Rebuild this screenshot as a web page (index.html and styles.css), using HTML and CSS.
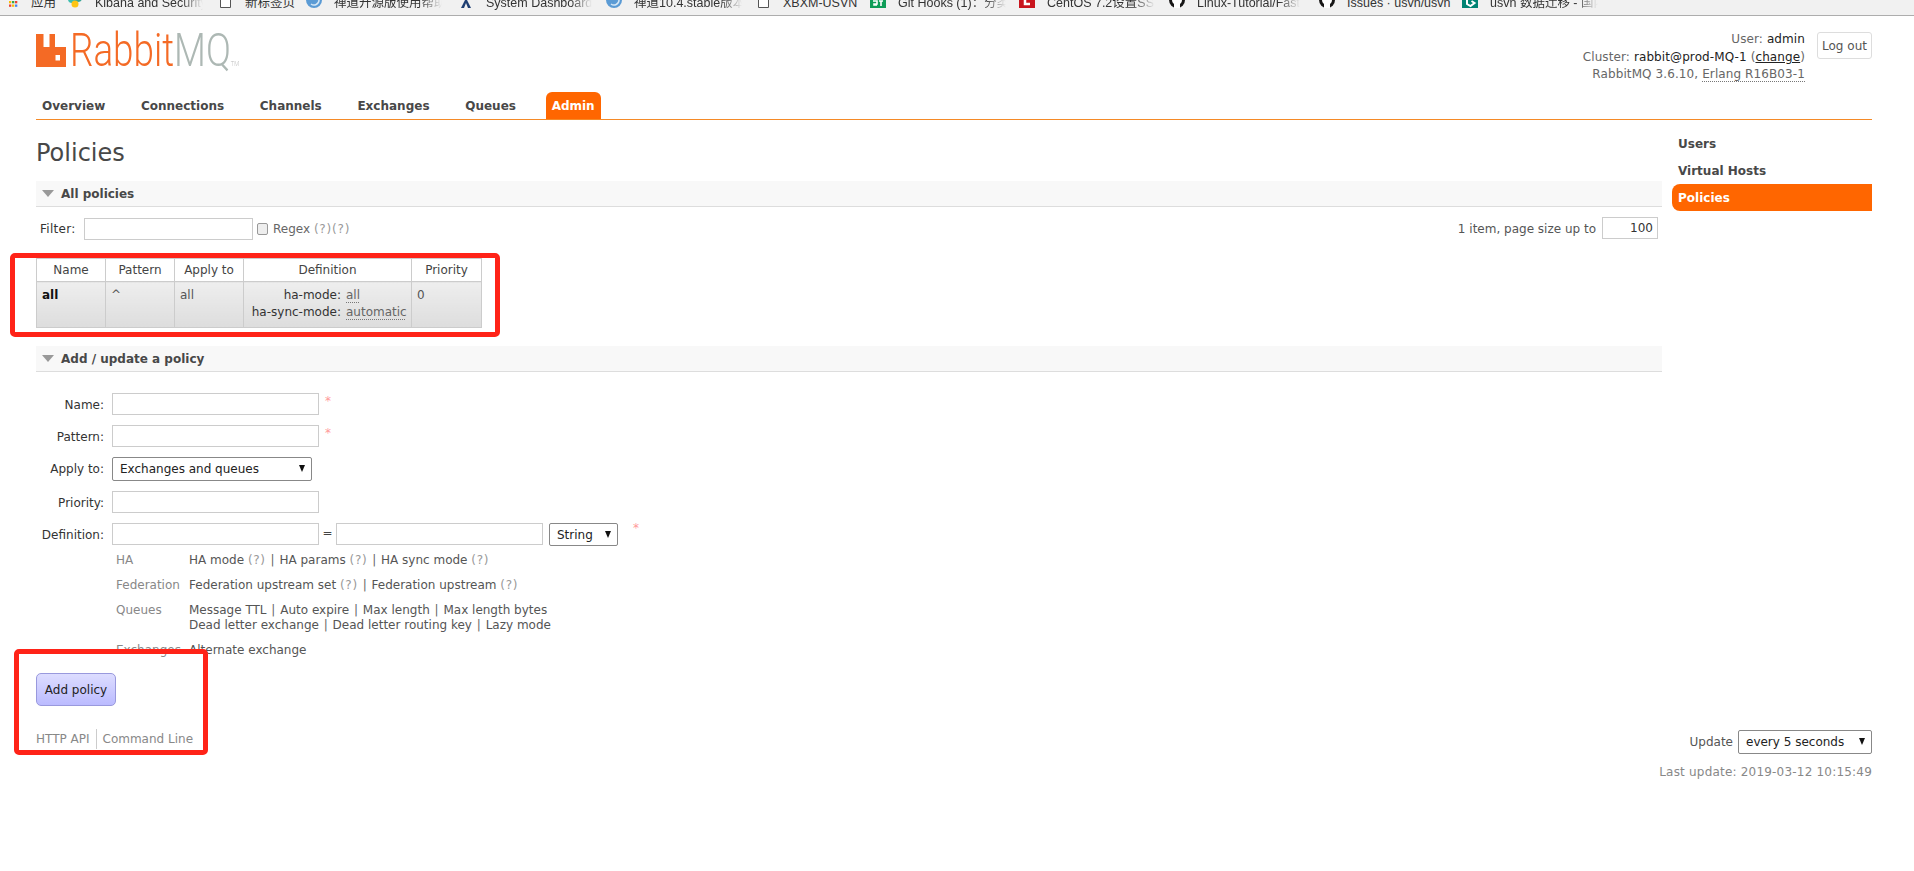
FILE: index.html
```html
<!DOCTYPE html>
<html lang="en">
<head>
<meta charset="utf-8">
<title>RabbitMQ Management</title>
<link rel="stylesheet" href="styles.css">
</head>
<body>
<nav class="bookmarks">
  <div class="bm bm-first"><svg class="ico" viewBox="0 0 16 16"><rect x="4" y="5" width="2.300" height="2.300" fill="#4285f4"/><rect x="7" y="5" width="2.300" height="2.300" fill="#ea4335"/><rect x="10" y="5" width="2.300" height="2.300" fill="#fbbc05"/><rect x="4" y="9" width="2.300" height="2.300" fill="#fbbc05"/><rect x="7" y="9" width="2.300" height="2.300" fill="#34a853"/><rect x="10" y="9" width="2.300" height="2.300" fill="#ea4335"/><rect x="4" y="12.500" width="2.300" height="2.300" fill="#ea4335"/><rect x="7" y="12.500" width="2.300" height="2.300" fill="#fbbc05"/><rect x="10" y="12.500" width="2.300" height="2.300" fill="#4285f4"/></svg><span class="bt">应用</span></div>
  <div class="bm"><svg class="ico" viewBox="0 0 16 16"><circle cx="5" cy="7" r="4" fill="#3ebeb0"/><circle cx="11" cy="6" r="4" fill="#37a595"/><circle cx="8" cy="12" r="3.5" fill="#fec514"/></svg><span class="bt fade">Kibana and Security</span></div>
  <div class="bm bm-doc"><svg class="ico doc" viewBox="0 0 11 16"><path d="M.5 0h10v15.500H.5z" fill="#fff" stroke="#555"/></svg><span class="bt">新标签页</span></div>
  <div class="bm"><svg class="ico" viewBox="0 0 16 16"><circle cx="8" cy="8" r="8" fill="#5b9bd5"/><path d="M3 8a5 5 0 0 1 9-3M5 12a5 5 0 0 0 8-4" fill="none" stroke="#d6e8f6" stroke-width="1.500"/></svg><span class="bt fade">禅道开源版使用帮助</span></div>
  <div class="bm"><svg class="ico" viewBox="0 0 16 16"><path d="M3 0l5 6 5-6h-2L8 3.500 5 0zM3 16l4-8 2 0 4 8h-3L8 11l-2 5z" fill="#1f3f73"/></svg><span class="bt fade">System Dashboard</span></div>
  <div class="bm"><svg class="ico" viewBox="0 0 16 16"><circle cx="8" cy="8" r="8" fill="#5b9bd5"/><path d="M3 8a5 5 0 0 1 9-3M5 12a5 5 0 0 0 8-4" fill="none" stroke="#d6e8f6" stroke-width="1.500"/></svg><span class="bt fade">禅道10.4.stable版本</span></div>
  <div class="bm bm-doc"><svg class="ico doc" viewBox="0 0 11 16"><path d="M.5 0h10v15.500H.5z" fill="#fff" stroke="#555"/></svg><span class="bt">XBXM-USVN</span></div>
  <div class="bm"><svg class="ico" viewBox="0 0 16 16"><rect width="16" height="16" fill="#0f9d58"/><path d="M3 9h4v3H4v1h3M9 9h4M11 9v5" fill="none" stroke="#fff" stroke-width="1.600"/></svg><span class="bt fade">Git Hooks (1)：分类</span></div>
  <div class="bm"><svg class="ico" viewBox="0 0 16 16"><rect width="16" height="16" fill="#c9151e"/><path d="M11 4H6v8h5" fill="none" stroke="#fff" stroke-width="2.500"/></svg><span class="bt fade">CentOS 7.2设置SSH</span></div>
  <div class="bm"><svg class="ico" viewBox="0 0 16 16"><circle cx="8" cy="8" r="8" fill="#181717"/><path d="M5 16v-4c-1-1-2-2-2-4 0-1 1-3 5-3s5 2 5 3c0 2-1 3-2 4v4z" fill="#fff"/></svg><span class="bt fade">Linux-Tutorial/Fast</span></div>
  <div class="bm"><svg class="ico" viewBox="0 0 16 16"><circle cx="8" cy="8" r="8" fill="#181717"/><path d="M5 16v-4c-1-1-2-2-2-4 0-1 1-3 5-3s5 2 5 3c0 2-1 3-2 4v4z" fill="#fff"/></svg><span class="bt">Issues · usvn/usvn</span></div>
  <div class="bm"><svg class="ico" viewBox="0 0 16 16"><rect width="16" height="16" fill="#008373"/><path d="M5 1v11l3.500 2 4-3-3-2" fill="none" stroke="#fff" stroke-width="2"/></svg><span class="bt fade">usvn 数据迁移 - 国内</span></div>
</nav>

<div class="page">
  <header class="head">
    <div class="logo">
      <svg class="logo-mark" viewBox="0 0 30 33"><path fill-rule="evenodd" fill="#f46a25" d="M0 0h7.500v13h6V0h5.500v13H30v20H0zM19.500 21v5.500H24V21z"/></svg>
      <span class="logo-text"><span class="logo-rabbit">Rabbit</span><span class="logo-mq">MQ</span><span class="logo-tm">TM</span></span>
    </div>
    <div class="login">
      <div class="login-text">
        <p>User: <b>admin</b></p>
        <p>Cluster: <b>rabbit@prod-MQ-1</b> (<a class="plain">change</a>)</p>
        <p>RabbitMQ 3.6.10, <abbr>Erlang R16B03-1</abbr></p>
      </div>
      <button class="logout" type="button">Log out</button>
    </div>
  </header>

  <ul class="tabs">
    <li>Overview</li><li>Connections</li><li>Channels</li><li>Exchanges</li><li>Queues</li><li class="on">Admin</li>
  </ul>

  <div class="columns">
    <main class="main">
      <h1>Policies</h1>
      <section class="section">
        <h2><i class="tri"></i>All policies</h2>
        <div class="filter">
          <label class="flabel">Filter:</label>
          <input class="tinput tf" type="text">
          <span class="chk"></span>
          <span class="regex">Regex <span class="hlp hlp-wide">(?)(?)</span></span>
          <span class="pagesize">1 item, page size up to</span>
          <input class="tinput tp" type="text" value="100">
        </div>
        <table class="list">
          <thead><tr><th class="c1">Name</th><th class="c2">Pattern</th><th class="c3">Apply to</th><th class="c4">Definition</th><th class="c5">Priority</th></tr></thead>
          <tbody><tr>
            <td><b class="pname">all</b></td>
            <td>^</td>
            <td>all</td>
            <td class="defn">
              <div class="kv"><span class="k">ha-mode:</span><abbr>all</abbr></div>
              <div class="kv"><span class="k">ha-sync-mode:</span><abbr>automatic</abbr></div>
            </td>
            <td>0</td>
          </tr></tbody>
        </table>
      </section>

      <section class="section section-add">
        <h2><i class="tri"></i>Add / update a policy</h2>
        <form class="form">
          <div class="row"><label>Name:</label><input class="tinput fi" type="text"><span class="star">*</span></div>
          <div class="row"><label>Pattern:</label><input class="tinput fi" type="text"><span class="star">*</span></div>
          <div class="row row-apply"><label>Apply to:</label><span class="sel sel-apply"><select><option>Exchanges and queues</option></select></span></div>
          <div class="row"><label>Priority:</label><input class="tinput fi" type="text"></div>
          <div class="row row-def"><label>Definition:</label><input class="tinput fi" type="text"><span class="eq">=</span><input class="tinput fi" type="text"><span class="sel sel-type"><select><option>String</option></select></span><span class="star star-def">*</span></div>
          <dl class="helpers">
            <dt>HA</dt><dd>HA mode <span class="hlp">(?)</span> <i class="sep">|</i> HA params <span class="hlp">(?)</span> <i class="sep">|</i> HA sync mode <span class="hlp">(?)</span></dd>
            <dt>Federation</dt><dd>Federation upstream set <span class="hlp">(?)</span> <i class="sep">|</i> Federation upstream <span class="hlp">(?)</span></dd>
            <dt>Queues</dt><dd>Message TTL <i class="sep">|</i> Auto expire <i class="sep">|</i> Max length <i class="sep">|</i> Max length bytes<br>Dead letter exchange <i class="sep">|</i> Dead letter routing key <i class="sep">|</i> Lazy mode</dd>
            <dt>Exchanges</dt><dd>Alternate exchange</dd>
          </dl>
          <button class="add" type="button">Add policy</button>
        </form>
      </section>
    </main>
    <aside class="side">
      <a>Users</a>
      <a>Virtual Hosts</a>
      <a class="on">Policies</a>
    </aside>
  </div>

  <footer class="foot">
    <div class="foot-links"><a>HTTP API</a><a>Command Line</a></div>
    <div class="foot-right">
      <div class="update"><span>Update</span><span class="sel sel-upd"><select><option>every 5 seconds</option></select></span></div>
      <div class="last">Last update: 2019-03-12 10:15:49</div>
    </div>
  </footer>
</div>

<div class="mark mark-table"></div>
<div class="mark mark-add"></div>
</body>
</html>
```
FILE: styles.css
```css
* { box-sizing: border-box; }
html, body { margin: 0; padding: 0; background: #fff; }
body { font: 12px/17px "DejaVu Sans", Verdana, sans-serif; color: #484848; position: relative; height: 871px; overflow: hidden; }
p { margin: 0; }

.bookmarks { display: grid; grid-template-columns: 62px 153px 86px 152px 148px 152px 112px 149px 150px 150px 143px 1fr; height: 16px; padding-left: 5px; background: #f1f1f1; border-bottom: 1px solid #adadad; overflow: hidden; }
.bm { display: flex; align-items: flex-start; gap: 12px; height: 16px; margin-top: -8px; min-width: 0; }
.bm-first { gap: 10px; }
.bm-doc { gap: 14px; }
.ico { width: 16px; height: 16px; flex: none; }
.ico.doc { width: 11px; }
.bt { margin-top: 3px; font: 12.500px/16px "Liberation Sans", "Noto Sans CJK SC", sans-serif; color: #333; white-space: nowrap; overflow: hidden; max-width: 108px; }
.fade { -webkit-mask-image: linear-gradient(90deg, #000 80%, transparent); mask-image: linear-gradient(90deg, #000 80%, transparent); }

.page { padding: 0 42px 0 36px; }
.head { display: flex; justify-content: space-between; height: 76px; padding-top: 17px; }
.logo { display: flex; align-items: flex-start; height: 40px; padding-top: 1px; }
.logo-mark { width: 30px; height: 33px; flex: none; }
.logo-text { display: block; font: 300 46px/33px Roboto, sans-serif; transform: scaleX(.8); transform-origin: 0 0; margin-left: 4px; white-space: nowrap; }
.logo-rabbit { color: #f46a25; }
.logo-mq { color: #adb8b4; }
.logo-tm { font-size: 7px; color: #bbb; letter-spacing: 0; }
.login { display: flex; gap: 12px; align-items: flex-start; }
.login-text { text-align: right; color: #666; margin-top: -2px; letter-spacing: .1px; }
.login-text p { height: 17.500px; line-height: 17.500px; }
.login-text b { font-weight: normal; color: #222; }
.plain { color: #222; text-decoration: underline; }
abbr { text-decoration: underline dotted #777; text-underline-offset: 3px; }
.logout { width: 55px; height: 27px; margin: -1px 0 0; padding: 0; background: #fff; border: 1px solid #ddd; border-radius: 3px; color: #555; font: 12px "DejaVu Sans", sans-serif; }

.tabs { list-style: none; margin: 0; padding: 0; display: flex; height: 28px; border-bottom: 1px solid #f58a27; font-weight: bold; color: #484848; }
.tabs li { height: 27px; padding: 0 6px; margin-right: 23.700px; line-height: 29px; }
.tabs li.on { background: #f60; color: #fff; border-radius: 6px 6px 0 0; margin-right: 0; }

.columns { display: grid; grid-template-columns: 1626px 200px; column-gap: 10px; }
.main { min-width: 0; }
h1 { margin: 0; font-size: 24px; font-weight: normal; line-height: 30px; padding-top: 18px; height: 61px; color: #484848; }
.section h2 { display: flex; align-items: center; margin: 0; height: 26px; padding: 2px 0 0 6px; background: #f8f8f8; border-bottom: 1px solid #ddd; font-size: 12px; font-weight: bold; color: #484848; }
.tri { width: 0; height: 0; margin: -2px 7px 0 0; border: 6px solid transparent; border-top: 7px solid #999; border-bottom: 0; }

.filter { display: flex; align-items: center; height: 21px; margin-top: 11px; }
.flabel { margin: 2px 0 0 4px; width: 44px; color: #333; letter-spacing: .3px; }
.tinput { display: block; height: 22px; margin: 0; padding: 0 4px; background: #fff; border: 1px solid #ccc; font: 12px "DejaVu Sans", sans-serif; color: #333; }
.tf { width: 169px; }
.chk { width: 11px; height: 12px; margin: 0 5px 0 4px; background: #eee; border: 1px solid #999; border-radius: 2px; }
.regex { margin-top: 2px; color: #666; }
.hlp { color: #999; letter-spacing: .7px; }
.hlp-wide { letter-spacing: .8px; }
.sep { font-style: normal; margin: 0 1px; color: #666; }
.pagesize { margin: 2px 0 0 auto; color: #555; }
.tp { width: 56px; margin: -2px 4px 0 6px; text-align: right; }

table.list { border-collapse: collapse; margin-top: 19px; table-layout: fixed; width: 445px; }
.list th, .list td { border: 1px solid #ccc; padding: 0; }
.list th { height: 23px; font-weight: normal; text-align: center; color: #444; }
.list td { height: 46px; padding: 5px 5px 3px; vertical-align: top; color: #555; background: linear-gradient(#eee, #ddd); }
.c1 { width: 69px; } .c2 { width: 69px; } .c3 { width: 69px; } .c4 { width: 168px; } .c5 { width: 70px; }
.pname { color: #111; }
.list td.defn { padding: 5px 0 0; }
.kv { display: grid; grid-template-columns: 97px auto; column-gap: 5px; justify-content: start; }
.k { text-align: right; color: #333; }
.kv abbr { justify-self: start; color: #666; }

.section-add { margin-top: 18px; }
.form { padding-top: 21px; }
.row { display: flex; align-items: flex-start; height: 32px; }
.row label { width: 68px; margin-right: 8px; text-align: right; color: #333; line-height: 25px; }
.row-apply { height: 34px; }
.row-def { height: 30px; }
.fi { width: 207px; }
.star { margin-left: 6px; color: #f99; line-height: 16px; }
.star-def { margin: -3px 0 0 15px; }
.eq { width: 17px; text-align: center; line-height: 21px; color: #444; }
.sel { position: relative; display: block; }
.sel select { display: block; width: 100%; height: 100%; margin: 0; padding: 0 0 0 7px; appearance: none; -webkit-appearance: none; background: #fff; border: 1px solid #888; border-radius: 2px; color: #222; font: 12px "DejaVu Sans", sans-serif; }
.sel::after { content: ""; position: absolute; right: 7px; top: 50%; margin-top: -4px; border: 3px solid transparent; border-top: 7px solid #111; border-bottom: 0; }
.sel-apply { width: 200px; height: 24px; }
.sel-type { width: 69px; height: 23px; margin-left: 6px; }
.sel-upd { width: 134px; height: 24px; }

.helpers { display: grid; grid-template-columns: 73px 1fr; margin: 0 0 0 80px; font-size: 12px; line-height: 15px; }
.helpers dt { color: #888; margin-bottom: 10px; }
.helpers dd { margin: 0 0 10px; color: #555; }
.add { display: block; width: 80px; height: 33px; margin: 5px 0 0; padding: 0; background: linear-gradient(#ddf, #bbf); border: 1px solid #99d; border-radius: 5px; color: #222; font: 12px "DejaVu Sans", sans-serif; }

.side { display: flex; flex-direction: column; padding-top: 10px; font-weight: bold; color: #484848; }
.side a { height: 27px; padding-left: 6px; line-height: 29px; }
.side a.on { background: #f60; color: #fff; border-radius: 8px 0 0 8px; }

.foot { display: flex; justify-content: space-between; align-items: flex-start; }
.foot-links { display: flex; margin-top: 23px; height: 20px; line-height: 20px; color: #888; }
.foot-links a:first-child { padding-right: 6px; border-right: 1px solid #ccc; }
.foot-links a:last-child { padding-left: 6px; }
.foot-right { text-align: right; }
.update { display: flex; justify-content: flex-end; align-items: center; gap: 5px; color: #555; margin-top: 24px; }
.last { margin-top: 10px; color: #888; letter-spacing: .2px; }

.mark { position: absolute; border: 5px solid #ff2318; border-radius: 5px; }
.mark-table { left: 10px; top: 253px; width: 490px; height: 84px; }
.mark-add { left: 14px; top: 649px; width: 194px; height: 106px; }
```
